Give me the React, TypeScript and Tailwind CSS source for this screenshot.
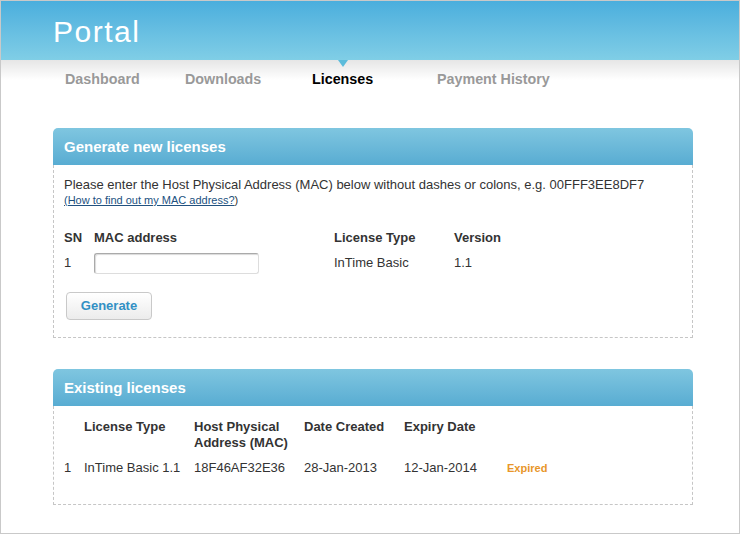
import { useState } from "react";

const tabs = ["Dashboard", "Downloads", "Licenses", "Payment History"];

function PanelHeader({ title }: { title: string }) {
  return (
    <div className="h-[37px] rounded-t-[5px] bg-gradient-to-b from-[#7fc6e0] to-[#58acd2] px-[11px] flex items-center">
      <h2 className="text-[15px] font-bold text-white pt-[1px]">{title}</h2>
    </div>
  );
}

export default function App() {
  const [mac, setMac] = useState("");
  const [active] = useState("Licenses");

  return (
    <div
      className="w-[740px] h-[534px] border border-[#c9c9c9] bg-white overflow-hidden text-[#333]"
      style={{ fontFamily: '"Liberation Sans", Arial, sans-serif' }}
    >
      <header className="h-[59px] bg-gradient-to-b from-[#4aaedd] to-[#80cee6] px-[52px] flex items-center">
        <h1 className="text-[30px] text-white tracking-[1.5px] leading-none pt-[2px]">Portal</h1>
      </header>

      <nav className="h-[40px] bg-gradient-to-b from-[#e6e6e6] via-white to-white flex pl-[64px]">
        {tabs.map((t, i) => (
          <div
            key={t}
            className={
              "relative flex items-center text-[14.3px] font-bold " +
              (i === 0 ? "w-[120px] " : i === 1 ? "w-[127px] " : i === 2 ? "w-[125px] " : "") +
              (t === active ? "text-black" : "text-[#999]")
            }
          >
            {t === active && (
              <span className="absolute top-0 left-[26px] w-0 h-0 border-l-[5px] border-r-[5px] border-t-[7px] border-l-transparent border-r-transparent border-t-[#5cbcdb]" />
            )}
            {t}
          </div>
        ))}
      </nav>

      <main className="px-[52px] pt-[28px] flex flex-col gap-[31px] w-[693px] box-content">
        <section className="w-[640px]">
          <PanelHeader title="Generate new licenses" />
          <div className="border border-t-0 border-dashed border-[#c6c6c6] h-[173px] px-[10px] pt-[12px]">
            <p className="text-[13px] leading-[16px] text-[#333]">
              Please enter the Host Physical Address (MAC) below without dashes or colons, e.g. 00FFF3EE8DF7
            </p>
            <p className="text-[11px] leading-[14px] text-[#333]">
              <a href="#" className="underline text-[#21517f]">
                (How to find out my MAC address?
              </a>
              )
            </p>

            <div className="grid grid-cols-[30px_240px_120px_100px] text-[13px] mt-[21px]">
              <div className="font-bold">SN</div>
              <div className="font-bold">MAC address</div>
              <div className="font-bold">License Type</div>
              <div className="font-bold">Version</div>
              <div className="pt-[5px]">1</div>
              <div className="pt-[5px]">
                <input
                  value={mac}
                  onChange={(e) => setMac(e.target.value)}
                  className="w-[165px] h-[21px] rounded-[3px] border border-[#aaa] border-b-[#ddd] border-r-[#ddd] shadow-[inset_1px_1px_1px_rgba(0,0,0,0.15)] px-[4px] text-[12px] outline-none"
                />
              </div>
              <div className="pt-[5px]">InTime Basic</div>
              <div className="pt-[5px]">1.1</div>
            </div>

            <button className="mt-[18px] ml-[2px] h-[28px] w-[86px] rounded-[4px] border border-[#c9c9c9] bg-gradient-to-b from-white to-[#ececec] text-[13px] font-bold text-[#3290c4]">
              Generate
            </button>
          </div>
        </section>

        <section className="w-[640px]">
          <PanelHeader title="Existing licenses" />
          <div className="border border-t-0 border-dashed border-[#c6c6c6] h-[99px] px-[10px] pt-[13px]">
            <div className="grid grid-cols-[20px_110px_110px_100px_103px_80px] text-[13px] leading-[16px]">
              <div />
              <div className="font-bold">License Type</div>
              <div className="font-bold">
                Host Physical
                <br />
                Address (MAC)
              </div>
              <div className="font-bold">Date Created</div>
              <div className="font-bold">Expiry Date</div>
              <div />
              <div className="pt-[9px]">1</div>
              <div className="pt-[9px]">InTime Basic 1.1</div>
              <div className="pt-[9px]">18F46AF32E36</div>
              <div className="pt-[9px]">28-Jan-2013</div>
              <div className="pt-[9px]">12-Jan-2014</div>
              <div className="pt-[9px] text-[11px] font-bold text-[#e8962a]">Expired</div>
            </div>
          </div>
        </section>
      </main>
    </div>
  );
}
